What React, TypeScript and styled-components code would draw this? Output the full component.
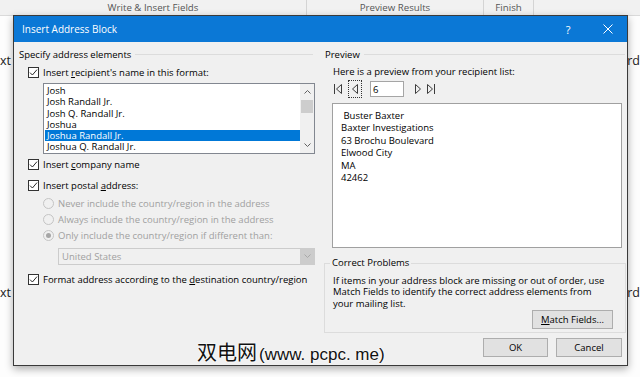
import React from "react";
import styled, { createGlobalStyle } from "styled-components";

const GlobalStyle = createGlobalStyle`
  html, body { margin: 0; padding: 0; }
  body { font-family: "Open Sans", "Noto Sans", sans-serif; background: #fdfdfd; }
  * { box-sizing: border-box; }
`;

const Page = styled.div`
  position: relative;
  width: 640px;
  height: 377px;
  overflow: hidden;
  background: #fdfdfd;
`;

const Ribbon = styled.div`
  display: flex;
  height: 16px;
  background: #f1f1f1;
  border-bottom: 1px solid #dadada;
`;

const RibbonGroup = styled.div<{ $w?: number }>`
  ${(p) => (p.$w ? `width: ${p.$w}px; flex: none;` : "flex: 1;")}
  display: flex;
  align-items: center;
  justify-content: center;
  font-size: 9.7px;
  color: #555;
  border-right: ${(p) => (p.$w ? "1px solid #d4d4d4" : "none")};
`;

const Doc = styled.div`
  display: flex;
  flex-direction: column;
  padding-top: 37px;
`;

const DocLine = styled.div<{ $mt: number }>`
  display: flex;
  justify-content: space-between;
  margin-top: ${(p) => p.$mt}px;
  font-size: 12.5px;
  line-height: 16px;
  color: #222;
`;

const Dialog = styled.div`
  position: absolute;
  left: 13px;
  top: 15px;
  width: 615px;
  height: 351px;
  background: #f0f0f0;
  border: 1px solid #3a3a3a;
  box-shadow: 0 3px 8px rgba(0, 0, 0, 0.32);
  display: flex;
  flex-direction: column;
  color: #000;
  font-size: 9.5px;
`;

const TitleBar = styled.div`
  height: 26px;
  flex: none;
  background: #0b78d6;
  color: #fff;
  display: flex;
  align-items: center;
  padding-left: 8px;
  font-size: 10px;
`;

const TitleButton = styled.div<{ $w: number; $ml: number }>`
  width: ${(p) => p.$w}px;
  margin-left: ${(p) => p.$ml}px;
  height: 26px;
  display: flex;
  align-items: center;
  justify-content: center;
  font-size: 11px;
`;

const Spacer = styled.div`
  flex: 1;
`;

const Body = styled.div`
  flex: 1;
  display: flex;
  padding: 0 1px 0 5px;
`;

const LeftCol = styled.div`
  width: 305px;
  flex: none;
  display: flex;
  flex-direction: column;
`;

const RightCol = styled.div`
  flex: 1;
  display: flex;
  flex-direction: column;
`;

const GroupHeader = styled.div<{ $mr: number; $pl?: number }>`
  display: flex;
  align-items: center;
  height: 12px;
  margin-top: 6px;
  padding-left: ${(p) => p.$pl ?? 0}px;
  white-space: nowrap;
  &::after {
    content: "";
    flex: 1;
    border-top: 1px solid #dcdcdc;
    margin-left: 4px;
    margin-right: ${(p) => p.$mr}px;
  }
`;

const Row = styled.div<{ $mt: number; $pl: number; $disabled?: boolean }>`
  display: flex;
  align-items: center;
  gap: 4px;
  height: 12px;
  margin-top: ${(p) => p.$mt}px;
  padding-left: ${(p) => p.$pl}px;
  white-space: nowrap;
  color: ${(p) => (p.$disabled ? "#a0a0a0" : "#000")};
`;

const Box = styled.span`
  width: 11px;
  height: 11px;
  flex: none;
  border: 1px solid #333;
  background: #fff;
  display: flex;
  align-items: center;
  justify-content: center;
`;

const Radio = styled.span<{ $on?: boolean }>`
  width: 11px;
  height: 11px;
  flex: none;
  border-radius: 50%;
  border: 1px solid #c4c4c4;
  background: #f0f0f0;
  display: flex;
  align-items: center;
  justify-content: center;
  &::after {
    content: "";
    display: ${(p) => (p.$on ? "block" : "none")};
    width: 5px;
    height: 5px;
    border-radius: 50%;
    background: #a6a6a6;
  }
`;

const ListBox = styled.div`
  margin-top: 4.5px;
  margin-left: 24px;
  width: 272px;
  height: 71px;
  border: 1px solid #828790;
  background: #fff;
  display: flex;
`;

const ListItems = styled.div`
  flex: 1;
  padding: 1px 0 0 1px;
`;

const ListItem = styled.div<{ $sel?: boolean }>`
  height: 11.3px;
  line-height: 11.3px;
  padding-left: 2px;
  white-space: nowrap;
  overflow: hidden;
  background: ${(p) => (p.$sel ? "#0078d7" : "transparent")};
  color: ${(p) => (p.$sel ? "#fff" : "#000")};
`;

const ScrollBar = styled.div`
  width: 14px;
  flex: none;
  background: #f0f0f0;
  display: flex;
  flex-direction: column;
`;

const ScrollArrow = styled.div`
  height: 16px;
  display: flex;
  align-items: center;
  justify-content: center;
`;

const ScrollThumb = styled.div`
  height: 13px;
  margin: 0 1px;
  background: #cdcdcd;
`;

const Select = styled.div`
  margin-top: 6.5px;
  margin-left: 39px;
  width: 257px;
  height: 17px;
  border: 1px solid #cccccc;
  background: #f0f0f0;
  color: #a0a0a0;
  display: flex;
  align-items: center;
  padding-left: 3px;
`;

const SelectButton = styled.div`
  width: 14px;
  height: 15px;
  margin-left: auto;
  background: #cccccc;
  display: flex;
  align-items: center;
  justify-content: center;
`;

const Intro = styled.div`
  margin-top: 6px;
  padding-left: 9px;
  height: 12px;
  line-height: 12px;
  white-space: nowrap;
`;

const NavRow = styled.div`
  margin-top: 2px;
  height: 18px;
  padding-left: 10px;
  display: flex;
  align-items: center;
`;

const NavIcon = styled.span<{ $ml: number }>`
  margin-left: ${(p) => p.$ml}px;
  display: flex;
  align-items: center;
`;

const Focus = styled.span`
  margin-left: 6px;
  width: 14px;
  height: 18px;
  border: 1px dotted #333;
  display: flex;
  align-items: center;
  justify-content: center;
`;

const NumInput = styled.div`
  margin-left: 8px;
  width: 34px;
  height: 16px;
  border: 1px solid #a5a5a5;
  background: #fff;
  padding-left: 2px;
  display: flex;
  align-items: center;
`;

const PreviewBox = styled.div`
  margin: 5px 4px 0 8px;
  height: 145px;
  flex: none;
  border: 1px solid #a0a0a0;
  background: #fff;
  padding: 6px 8px;
  line-height: 12.4px;
  white-space: pre;
`;

const Fieldset = styled.fieldset`
  margin: 9px 0 0 0;
  min-width: 0;
  border: 1px solid #dcdcdc;
  padding: 6px 11px 3px 8px;
  display: flex;
  flex-direction: column;
`;

const Legend = styled.legend`
  padding: 0 2px;
  margin-left: -3px;
  height: 12px;
  line-height: 12px;
`;

const HelpLine = styled.div`
  line-height: 11.3px;
  white-space: nowrap;
`;

const ButtonRow = styled.div<{ $mt: number; $pr: number }>`
  display: flex;
  justify-content: flex-end;
  gap: 8px;
  margin-top: ${(p) => p.$mt}px;
  padding-right: ${(p) => p.$pr}px;
`;

const Button = styled.div<{ $w: number }>`
  width: ${(p) => p.$w}px;
  height: 19px;
  background: #e1e1e1;
  border: 1px solid #adadad;
  display: flex;
  align-items: center;
  justify-content: center;
  white-space: nowrap;
`;

const Watermark = styled.div`
  position: absolute;
  left: 197px;
  top: 339px;
  display: flex;
  align-items: baseline;
  font-family: "Noto Sans CJK SC", sans-serif;
  font-size: 20px;
  line-height: 26px;
  color: #111;
  white-space: nowrap;
  text-shadow: 0 0 2px #fff, 0 0 2px #fff;
`;

const WatermarkLatin = styled.span`
  font-family: "Liberation Sans", sans-serif;
  font-size: 17px;
  margin-left: 2px;
`;

const Check = () => (
  <svg width="9" height="9" viewBox="0 0 9 9">
    <path d="M1 4.6 L3.4 7 L8 1.6" fill="none" stroke="#2a2a2a" strokeWidth="1" />
  </svg>
);

const Chevron = ({ up, color = "#606060" }: { up?: boolean; color?: string }) => (
  <svg width="7" height="4" viewBox="0 0 7 4">
    <path d={up ? "M0.5 3.5 L3.5 0.5 L6.5 3.5" : "M0.5 0.5 L3.5 3.5 L6.5 0.5"} fill="none" stroke={color} strokeWidth="1" />
  </svg>
);

const NavGlyph = ({ dir, bar }: { dir: "l" | "r"; bar?: boolean }) => {
  const w = bar ? 8 : 6;
  let d = "";
  if (dir === "l") {
    d = bar ? "M0.5 0 V10 M7.5 0.5 L2.5 5 L7.5 9.5 Z" : "M5.5 0.5 L0.5 5 L5.5 9.5 Z";
  } else {
    d = bar ? "M7.5 0 V10 M0.5 0.5 L5.5 5 L0.5 9.5 Z" : "M0.5 0.5 L5.5 5 L0.5 9.5 Z";
  }
  return (
    <svg width={w} height="10" viewBox={`0 0 ${w} 10`}>
      <path d={d} fill="none" stroke="#3c3c3c" strokeWidth="1" />
    </svg>
  );
};

export default function App() {
  return (
    <Page>
      <GlobalStyle />
      <Ribbon>
        <RibbonGroup $w={307}>Write &amp; Insert Fields</RibbonGroup>
        <RibbonGroup $w={177}>Preview Results</RibbonGroup>
        <RibbonGroup $w={50}>Finish</RibbonGroup>
        <RibbonGroup />
      </Ribbon>
      <Doc>
        <DocLine $mt={0}>
          <span>xt</span>
          <span>rd</span>
        </DocLine>
        <DocLine $mt={216}>
          <span>xt</span>
          <span>rd</span>
        </DocLine>
      </Doc>

      <Dialog>
        <TitleBar>
          Insert Address Block
          <Spacer />
          <TitleButton $w={30} $ml={0}>?</TitleButton>
          <TitleButton $w={38} $ml={6}>
            <svg width="10" height="10" viewBox="0 0 10 10">
              <path d="M0.5 0.5 L9.5 9.5 M9.5 0.5 L0.5 9.5" stroke="#fff" strokeWidth="1" />
            </svg>
          </TitleButton>
        </TitleBar>
        <Body>
          <LeftCol>
            <GroupHeader $mr={11}>Specify address elements</GroupHeader>
            <Row $mt={6.5} $pl={9}>
              <Box><Check /></Box>
              <span>Insert <u>r</u>ecipient's name in this format:</span>
            </Row>
            <ListBox>
              <ListItems>
                <ListItem>Josh</ListItem>
                <ListItem>Josh Randall Jr.</ListItem>
                <ListItem>Josh Q. Randall Jr.</ListItem>
                <ListItem>Joshua</ListItem>
                <ListItem $sel>Joshua Randall Jr.</ListItem>
                <ListItem>Joshua Q. Randall Jr.</ListItem>
              </ListItems>
              <ScrollBar>
                <ScrollArrow><Chevron up /></ScrollArrow>
                <ScrollThumb />
                <Spacer />
                <ScrollArrow><Chevron /></ScrollArrow>
              </ScrollBar>
            </ListBox>
            <Row $mt={4.5} $pl={9}>
              <Box><Check /></Box>
              <span>Insert <u>c</u>ompany name</span>
            </Row>
            <Row $mt={8.5} $pl={9}>
              <Box><Check /></Box>
              <span>Insert postal <u>a</u>ddress:</span>
            </Row>
            <Row $mt={6.3} $pl={24} $disabled>
              <Radio />
              <span>Never include the country/region in the address</span>
            </Row>
            <Row $mt={4} $pl={24} $disabled>
              <Radio />
              <span>Always include the country/region in the address</span>
            </Row>
            <Row $mt={4.2} $pl={24} $disabled>
              <Radio $on />
              <span>Only include the country/region if different than:</span>
            </Row>
            <Select>
              United States
              <SelectButton><Chevron color="#a8a8a8" /></SelectButton>
            </Select>
            <Row $mt={8.3} $pl={9}>
              <Box><Check /></Box>
              <span>Format address according to the <u>d</u>estination country/region</span>
            </Row>
          </LeftCol>

          <RightCol>
            <GroupHeader $mr={1} $pl={1}>Preview</GroupHeader>
            <Intro>Here is a preview from your recipient list:</Intro>
            <NavRow>
              <NavIcon $ml={0}><NavGlyph dir="l" bar /></NavIcon>
              <Focus><NavGlyph dir="l" /></Focus>
              <NumInput>6</NumInput>
              <NavIcon $ml={11}><NavGlyph dir="r" /></NavIcon>
              <NavIcon $ml={6}><NavGlyph dir="r" bar /></NavIcon>
            </NavRow>
            <PreviewBox>
              {" Buster Baxter\nBaxter Investigations\n63 Brochu Boulevard\nElwood City\nMA\n42462"}
            </PreviewBox>
            <Fieldset>
              <Legend>Correct Problems</Legend>
              <HelpLine>If items in your address block are missing or out of order, use</HelpLine>
              <HelpLine>Match Fields to identify the correct address elements from</HelpLine>
              <HelpLine>your mailing list.</HelpLine>
              <ButtonRow $mt={1} $pr={1}>
                <Button $w={81}><span><u>M</u>atch Fields...</span></Button>
              </ButtonRow>
            </Fieldset>
            <ButtonRow $mt={5} $pr={4}>
              <Button $w={65}>OK</Button>
              <Button $w={66}>Cancel</Button>
            </ButtonRow>
          </RightCol>
        </Body>
      </Dialog>
      <Watermark>
        双电网<WatermarkLatin>(www. pcpc. me)</WatermarkLatin>
      </Watermark>
    </Page>
  );
}
